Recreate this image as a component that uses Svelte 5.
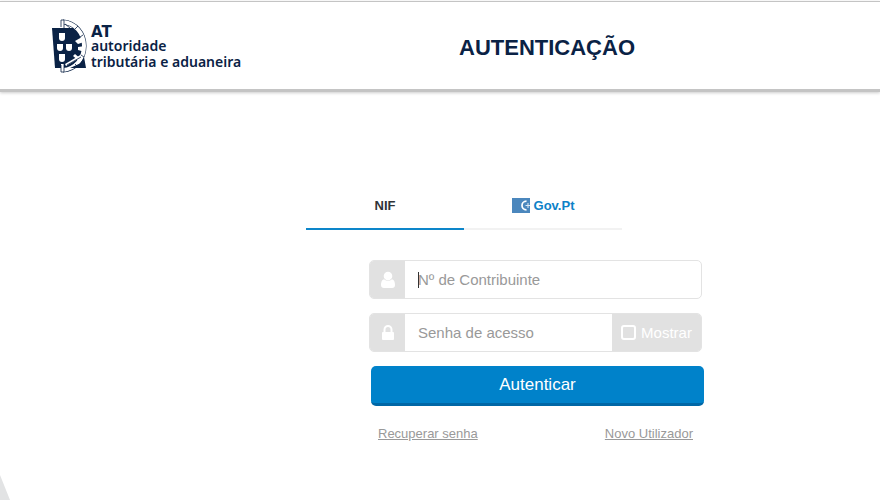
<script lang="ts">
	type Tab = 'nif' | 'gov';

	let tab = $state<Tab>('nif');
	let nif = $state('');
	let password = $state('');
	let visible = $state(false);
</script>

<div class="page">
	<header class="header">
		<a class="brand" href="#inicio">
			<svg class="emblem" width="36" height="54" viewBox="0 0 36 54" aria-hidden="true">
				<path class="navy" d="M1 9H29L34 49H4Z" />
				<path class="ring" d="M12 3C24 4 33 14 33 27S24 50 12 51" />
				<path class="ring-inner" d="M12 3C24 4 33 14 33 27S24 50 12 51" />
				<path class="white" d="M24 22L31 18L33 23L27 25ZM27 28L34 27V33L27 31ZM22 37L24 35L31 41L29 43Z" />
				<path class="white" d="M14 45L31 35L32 37L15 47Z" />
				<path class="navy" d="M33 38L35 49H19L30 44Z" />
				<path class="trace" d="M14 5L19 9M24 10L27 7M29 18L32 16M30 36L33 38M24 45L27 48M16 46L30 38" />
				<path class="white" d="M10 1H13V9H10ZM10 45H13V53H10Z" />
				<path class="trace" d="M13 9V1H10V8M10 46V53H13V45" />
				<g class="white">
					<path d="M8 14H14V19Q14 22 11 22Q8 22 8 19Z" />
					<path d="M6 25H12V29Q12 32 9 32Q6 32 6 29Z" />
					<path d="M15 25H21V29Q21 32 18 32Q15 32 15 29Z" />
					<path d="M8 35H14V40Q14 43 11 43Q8 43 8 40Z" />
				</g>
			</svg>
			<span class="brand-text">
				<strong>AT</strong>
				<span>autoridade</span>
				<span>tributária e aduaneira</span>
			</span>
		</a>
		<h1>AUTENTICAÇÃO</h1>
	</header>

	<main class="login">
		<div class="tabs" role="tablist">
			<button
				class="tab"
				class:active={tab === 'nif'}
				role="tab"
				aria-selected={tab === 'nif'}
				onclick={() => (tab = 'nif')}
			>
				NIF
			</button>
			<button
				class="tab"
				class:active={tab === 'gov'}
				role="tab"
				aria-selected={tab === 'gov'}
				onclick={() => (tab = 'gov')}
			>
				<svg width="18" height="15" viewBox="0 0 18 15" aria-hidden="true">
					<rect width="18" height="15" fill="#4b87bd" />
					<path d="M14.5 3.2C8.5 3.2 8.5 11.8 14.5 11.8" fill="none" stroke="#fff" stroke-width="1.7" />
					<path d="M16 5V10M13.5 7.5H18" stroke="#dce8f3" stroke-width="1" />
				</svg>
				Gov.Pt
			</button>
		</div>

		<form class="form" onsubmit={(e) => e.preventDefault()}>
			<div class="field">
				<label class="addon" for="nif" aria-label="Nº de Contribuinte">
					<svg width="16" height="18" viewBox="0 0 16 18" aria-hidden="true">
						<circle cx="8" cy="5" r="4.3" />
						<path d="M4 8.2C1.5 8.8 1 11.5 1 14Q1 17 4 17H12Q15 17 15 14C15 11.5 14.5 8.8 12 8.2Q8 11.5 4 8.2Z" />
					</svg>
				</label>
				<div class="control" class:empty={nif === ''}>
					<input id="nif" type="text" placeholder="Nº de Contribuinte" bind:value={nif} />
				</div>
			</div>

			<div class="field">
				<label class="addon" for="password" aria-label="Senha de acesso">
					<svg width="16" height="18" viewBox="0 0 16 18" aria-hidden="true">
						<path d="M4.5 8V5.5a3.5 3.5 0 0 1 7 0V8" class="shackle" />
						<rect x="2" y="8" width="12" height="8" rx="1" />
					</svg>
				</label>
				<div class="control">
					<input
						id="password"
						type={visible ? 'text' : 'password'}
						placeholder="Senha de acesso"
						bind:value={password}
					/>
				</div>
				<label class="show">
					<input type="checkbox" bind:checked={visible} />
					Mostrar
				</label>
			</div>

			<button class="submit" type="submit">Autenticar</button>

			<nav class="links">
				<a href="#recuperar">Recuperar senha</a>
				<a href="#novo">Novo Utilizador</a>
			</nav>
		</form>
	</main>

	<div class="corner" aria-hidden="true"></div>
</div>

<style>
	:global(body) {
		margin: 0;
		background: #fff;
	}

	.page {
		position: relative;
		box-sizing: border-box;
		min-height: 100vh;
		padding-top: 1px;
		overflow: hidden;
		font-family: 'Liberation Sans', Arial, sans-serif;
	}

	.page * {
		box-sizing: border-box;
	}

	/* header */
	.header {
		display: grid;
		grid-template-columns: 408px 1fr;
		align-items: center;
		padding: 17px 51px 16px;
		border-top: 1px solid #c4c4c4;
		border-bottom: 3px solid #c4c4c4;
		box-shadow: 0 1px 3px #ccc;
	}

	.brand {
		display: flex;
		gap: 4px;
		color: #0a2245;
		text-decoration: none;
	}

	.emblem {
		flex-shrink: 0;
	}

	.navy {
		fill: #0a2245;
	}
	.white {
		fill: #fff;
	}
	.ring,
	.ring-inner,
	.trace {
		fill: none;
	}
	.ring {
		stroke: #0a2245;
		stroke-width: 5;
	}
	.ring-inner {
		stroke: #fff;
		stroke-width: 4;
	}
	.trace {
		stroke: #0a2245;
		stroke-width: 0.8;
	}

	.brand-text {
		display: flex;
		flex-direction: column;
		padding-top: 7px;
		font: 600 14px/16px 'Noto Sans', sans-serif;
		white-space: nowrap;
	}

	.brand-text strong {
		font: bold 15px/12px 'DejaVu Sans', sans-serif;
	}

	h1 {
		margin: 0;
		padding-top: 4px;
		color: #0a2245;
		font-size: 22px;
		line-height: 24px;
	}

	/* login area */
	.login {
		padding: 87px 176px 0 306px;
	}

	.tabs {
		display: flex;
		margin-right: 82px;
	}

	.tab {
		display: flex;
		flex: 1;
		align-items: center;
		justify-content: center;
		gap: 4px;
		height: 51px;
		padding: 4px 0 0;
		border: 0;
		border-bottom: 2px solid #f2f2f2;
		background: none;
		color: #0d82c8;
		font: bold 13px/16px 'Liberation Sans', Arial, sans-serif;
		cursor: pointer;
	}

	.tab.active {
		border-color: #0d86ca;
		color: #2f3337;
	}

	.form {
		display: flex;
		flex-direction: column;
		gap: 14px;
		margin: 30px 0 0 63px;
	}

	.field {
		display: flex;
		height: 39px;
		margin-right: 2px;
		border: 1px solid #e3e3e3;
		border-radius: 5px;
		overflow: hidden;
	}

	.addon {
		display: flex;
		flex: 0 0 35px;
		align-items: center;
		justify-content: center;
		background: #e1e1e1;
	}

	.addon svg {
		fill: #fff;
	}

	.addon .shackle {
		fill: none;
		stroke: #fff;
		stroke-width: 2;
	}

	.control {
		position: relative;
		flex: 1;
		min-width: 0;
	}

	/* text cursor in front of the placeholder */
	.control.empty::before {
		content: '';
		position: absolute;
		top: 11px;
		left: 13px;
		width: 1px;
		height: 16px;
		background: #333;
	}

	.control input {
		display: block;
		width: 100%;
		height: 100%;
		padding: 0 13px;
		border: 0;
		outline: 0;
		background: none;
		color: #444;
		font: 15px/20px 'Liberation Sans', Arial, sans-serif;
	}

	.control input::placeholder {
		color: #999;
		opacity: 1;
	}

	.show {
		display: flex;
		flex: 0 0 89px;
		align-items: center;
		justify-content: center;
		gap: 5px;
		background: #e1e1e1;
		color: #fff;
		font-size: 15px;
		line-height: 20px;
	}

	.show input {
		appearance: none;
		width: 15px;
		height: 15px;
		margin: 0;
		border: 2px solid #fff;
		border-radius: 3px;
	}

	.show input:checked {
		background: #fff;
	}

	.submit {
		height: 40px;
		margin-left: 2px;
		padding: 0;
		border: 0;
		border-bottom: 3px solid #0067a6;
		border-radius: 5px;
		background: #0082ca;
		color: #fff;
		font: 17px/20px 'Liberation Sans', Arial, sans-serif;
		cursor: pointer;
	}

	.links {
		display: flex;
		justify-content: space-between;
		padding: 5px 11px 0 9px;
		font-size: 13px;
		line-height: 18px;
	}

	.links a {
		color: #999;
	}

	.corner {
		position: absolute;
		bottom: 0;
		left: 0;
		width: 10px;
		height: 25px;
		background: #e2e3e4;
		clip-path: polygon(0 0, 100% 100%, 0 100%);
	}
</style>
